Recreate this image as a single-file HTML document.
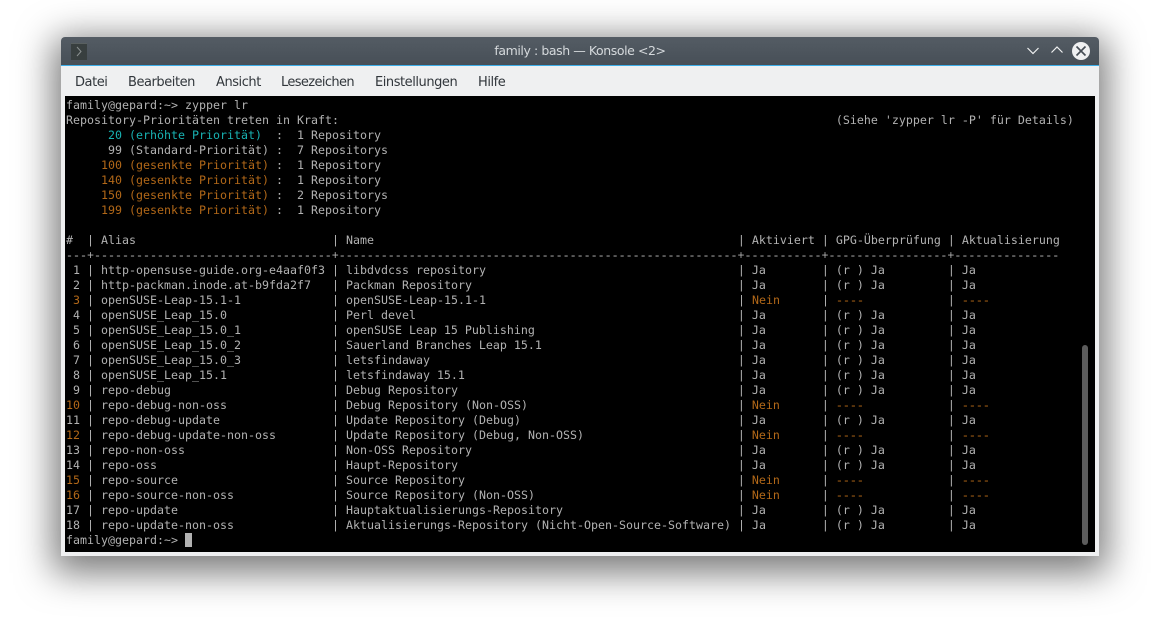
<!DOCTYPE html>
<html><head><meta charset="utf-8"><style>
html,body{margin:0;padding:0;width:1160px;height:617px;background:#fff;overflow:hidden}
#win{position:absolute;left:61px;top:37px;width:1038px;height:519px;background:#eff0f1;border-radius:4px 4px 0 0;box-shadow:0 9px 36px 8px rgba(0,0,0,.52)}
#tb{position:absolute;left:0;top:0;width:1038px;height:28px;background:linear-gradient(#545c64,#474f57);border-radius:4px 4px 0 0;border-bottom:1px solid #3daee9}
#title{position:absolute;left:0;width:1038px;top:6px;text-align:center;color:#d5d9dc;font:12.5px/16px "DejaVu Sans",sans-serif;letter-spacing:-.42px}
.m{position:absolute;top:38px;color:#31363b;font:13px/16px "DejaVu Sans",sans-serif;letter-spacing:-.45px;white-space:pre}
#term{position:absolute;left:4px;top:59px;width:1030px;height:456px;background:#000;overflow:hidden}
pre{position:absolute;left:1px;top:2px;margin:0;font:11.63px/15px "DejaVu Sans Mono",monospace;color:#b2b2b2;white-space:pre}
i{font-style:normal;font-family:"Liberation Mono",monospace;font-size:11.67px;line-height:0}
.o{color:#b26818}.c{color:#18b2b2}
#cur{position:absolute;left:120px;top:437px;width:7px;height:14px;background:#b2b2b2}
#sb{position:absolute;left:1017px;top:249px;width:6px;height:200px;background:#5c5c5c;border-radius:3px}
svg{position:absolute}
</style></head><body>
<div id="win">
<div id="tb">
<svg style="left:10px;top:6px" width="16" height="17" viewBox="0 0 16 17"><rect width="16" height="17" fill="#383f3f"/><rect width="16" height="1" fill="#596060"/><path d="M6 4l4 4.5-4 4.5" fill="none" stroke="#8a9090" stroke-width="1"/></svg>
<div id="title">family : bash — Konsole &lt;2&gt;</div>
<svg style="left:965px;top:8px" width="14" height="12" viewBox="0 0 14 12"><path d="M1.5 3l5.5 5.5 5.5-5.5" fill="none" stroke="#eff0f1" stroke-width="1.2"/></svg>
<svg style="left:989px;top:7px" width="14" height="12" viewBox="0 0 14 12"><path d="M1.5 8.5l5.5-5.5 5.5 5.5" fill="none" stroke="#eff0f1" stroke-width="1.2"/></svg>
<svg style="left:1011px;top:5px" width="18" height="18" viewBox="0 0 18 18"><circle cx="9" cy="9" r="9" fill="#eff0f1"/><path d="M4.5 4.5l9 9M13.5 4.5l-9 9" stroke="#454c54" stroke-width="1.6"/></svg>
</div>
<div class="m" style="left:14px">Datei</div>
<div class="m" style="left:67px">Bearbeiten</div>
<div class="m" style="left:155px">Ansicht</div>
<div class="m" style="left:220px;letter-spacing:-.62px">Lesezeichen</div>
<div class="m" style="left:314px">Einstellungen</div>
<div class="m" style="left:417px">Hilfe</div>
<div id="term"><pre>family@gepard:~&gt; zypper lr
Repository<i>-</i>Prioritäten treten in Kraft:                                                                       (Siehe 'zypper lr <i>-</i>P' für Details)
      <span class="c">20 (erhöhte Priorität) </span> :  1 Repository
      99 (Standard<i>-</i>Priorität) :  7 Repositorys
     <span class="o">100 (gesenkte Priorität)</span> :  1 Repository
     <span class="o">140 (gesenkte Priorität)</span> :  1 Repository
     <span class="o">150 (gesenkte Priorität)</span> :  2 Repositorys
     <span class="o">199 (gesenkte Priorität)</span> :  1 Repository

#  | Alias                            | Name                                                    | Aktiviert | GPG<i>-</i>Überprüfung | Aktualisierung
<i>---+----------------------------------+---------------------------------------------------------+-----------+-----------------+---------------</i>
 1 | http<i>-</i>opensuse<i>-</i>guide.org<i>-</i>e4aaf0f3 | libdvdcss repository                                    | Ja        | (r ) Ja         | Ja
 2 | http<i>-</i>packman.inode.at<i>-</i>b9fda2f7   | Packman Repository                                      | Ja        | (r ) Ja         | Ja
 <span class="o">3</span> | openSUSE<i>-</i>Leap<i>-</i>15.1<i>-</i>1             | openSUSE<i>-</i>Leap<i>-</i>15.1<i>-</i>1                                    | <span class="o">Nein</span>      | <i class="o">----</i>            | <i class="o">----</i>
 4 | openSUSE_Leap_15.0               | Perl devel                                              | Ja        | (r ) Ja         | Ja
 5 | openSUSE_Leap_15.0_1             | openSUSE Leap 15 Publishing                             | Ja        | (r ) Ja         | Ja
 6 | openSUSE_Leap_15.0_2             | Sauerland Branches Leap 15.1                            | Ja        | (r ) Ja         | Ja
 7 | openSUSE_Leap_15.0_3             | letsfindaway                                            | Ja        | (r ) Ja         | Ja
 8 | openSUSE_Leap_15.1               | letsfindaway 15.1                                       | Ja        | (r ) Ja         | Ja
 9 | repo<i>-</i>debug                       | Debug Repository                                        | Ja        | (r ) Ja         | Ja
<span class="o">10</span> | repo<i>-</i>debug<i>-</i>non<i>-</i>oss               | Debug Repository (Non<i>-</i>OSS)                              | <span class="o">Nein</span>      | <i class="o">----</i>            | <i class="o">----</i>
11 | repo<i>-</i>debug<i>-</i>update                | Update Repository (Debug)                               | Ja        | (r ) Ja         | Ja
<span class="o">12</span> | repo<i>-</i>debug<i>-</i>update<i>-</i>non<i>-</i>oss        | Update Repository (Debug, Non<i>-</i>OSS)                      | <span class="o">Nein</span>      | <i class="o">----</i>            | <i class="o">----</i>
13 | repo<i>-</i>non<i>-</i>oss                     | Non<i>-</i>OSS Repository                                      | Ja        | (r ) Ja         | Ja
14 | repo<i>-</i>oss                         | Haupt<i>-</i>Repository                                        | Ja        | (r ) Ja         | Ja
<span class="o">15</span> | repo<i>-</i>source                      | Source Repository                                       | <span class="o">Nein</span>      | <i class="o">----</i>            | <i class="o">----</i>
<span class="o">16</span> | repo<i>-</i>source<i>-</i>non<i>-</i>oss              | Source Repository (Non<i>-</i>OSS)                             | <span class="o">Nein</span>      | <i class="o">----</i>            | <i class="o">----</i>
17 | repo<i>-</i>update                      | Hauptaktualisierungs<i>-</i>Repository                         | Ja        | (r ) Ja         | Ja
18 | repo<i>-</i>update<i>-</i>non<i>-</i>oss              | Aktualisierungs<i>-</i>Repository (Nicht<i>-</i>Open<i>-</i>Source<i>-</i>Software) | Ja        | (r ) Ja         | Ja
family@gepard:~&gt; </pre>
<div id="cur"></div><div id="sb"></div></div>
</div>
</body></html>
